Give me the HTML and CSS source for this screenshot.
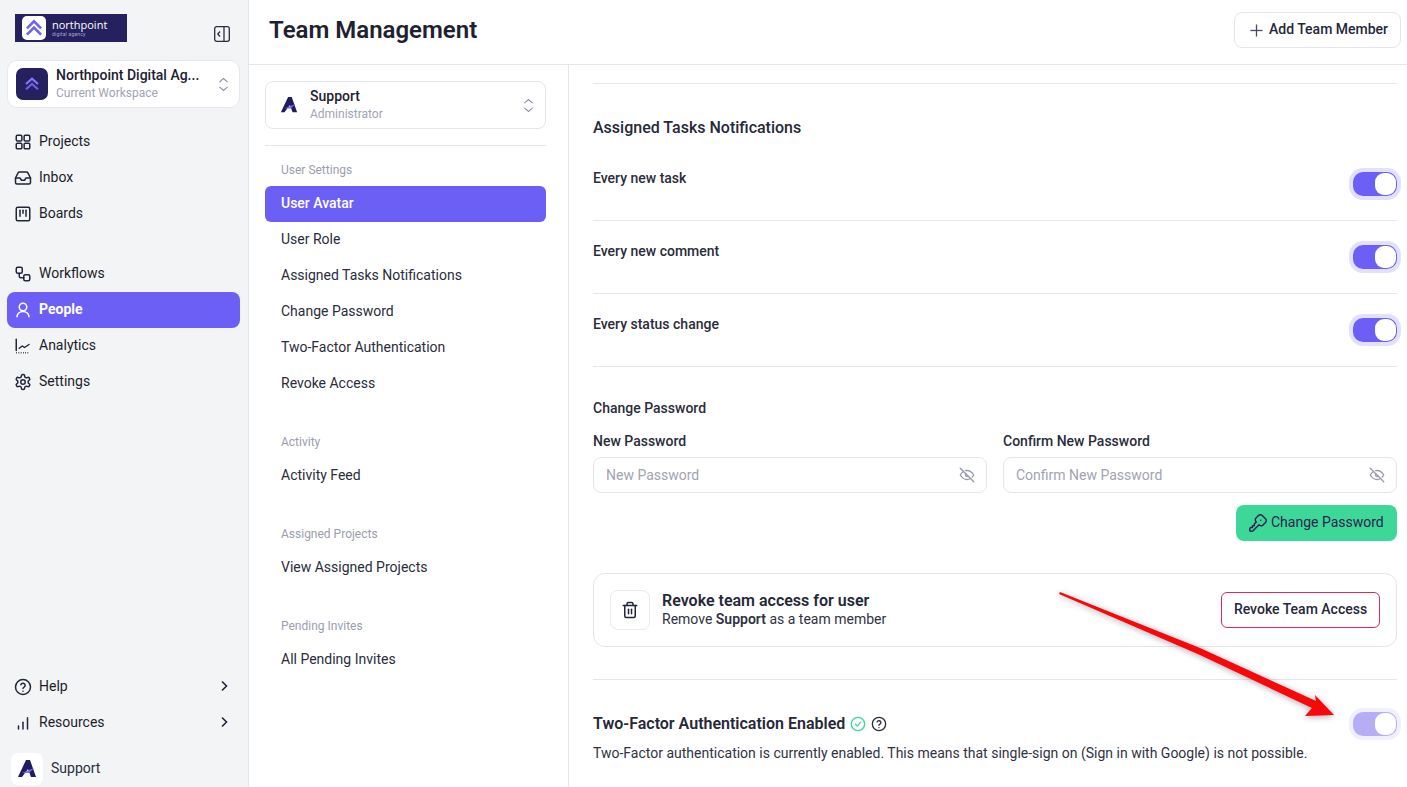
FILE: index.html
```html
<!DOCTYPE html>
<html lang="en">
<head>
<meta charset="utf-8">
<title>Team Management</title>
<link rel="stylesheet" href="styles.css">
</head>
<body>
<div class="app">
  <aside class="sidebar">
    <div class="brand-row">
      <div class="brand">
        <span class="brand-mark"><svg viewBox="0 0 24 24" width="20" height="20" fill="none" stroke="#6f62f3" stroke-width="3.2"><path d="M3.5 12.5L12 4l8.5 8.5"/><path d="M3.5 20L12 11.5l8.5 8.5"/></svg></span>
        <span class="brand-text"><span class="brand-name">northpoint</span><span class="brand-sub">digital agency</span></span>
      </div>
      <svg class="ic16 collapse" viewBox="0 0 16 16" fill="none" stroke="#2a2d3e" stroke-width="1.3" stroke-linejoin="round"><rect x="0.7" y="0.7" width="14.6" height="14.6" rx="2"/><path d="M10 1v14"/><path d="M6 5.5L3.8 8 6 10.5"/></svg>
    </div>
    <div class="workspace">
      <span class="ws-logo"><svg viewBox="0 0 24 24" width="18" height="18" fill="none" stroke="#8577f5" stroke-width="3"><path d="M4 12l8-7 8 7"/><path d="M4 19l8-7 8 7" stroke="#6c5ff0"/></svg></span>
      <span class="ws-text"><span class="ws-name">Northpoint Digital Ag...</span><span class="ws-sub">Current Workspace</span></span>
      <svg class="selector" viewBox="0 0 12 16" fill="none" stroke="#8d8fa3" stroke-width="1.2"><path d="M1.5 5.5L6 1.5l4.5 4"/><path d="M1.5 10.5L6 14.5l4.5-4"/></svg>
    </div>
    <nav class="nav nav-first">
      <a class="nav-item"><svg class="ic" viewBox="0 0 24 24"><rect x="3" y="3" width="7.5" height="7.5" rx="1.5"/><rect x="13.5" y="3" width="7.5" height="7.5" rx="1.5"/><rect x="3" y="13.5" width="7.5" height="7.5" rx="1.5"/><rect x="13.5" y="13.5" width="7.5" height="7.5" rx="1.5"/></svg>Projects</a>
      <a class="nav-item"><svg class="ic" viewBox="0 0 24 24"><polyline points="22 12 16 12 14 15 10 15 8 12 2 12"/><path d="M5.45 5.11 2 12v6a2 2 0 0 0 2 2h16a2 2 0 0 0 2-2v-6l-3.45-6.89A2 2 0 0 0 16.76 4H7.24a2 2 0 0 0-1.79 1.11z"/></svg>Inbox</a>
      <a class="nav-item"><svg class="ic" viewBox="0 0 24 24"><rect x="3" y="3" width="18" height="18" rx="2"/><path d="M8 7v8"/><path d="M12 7v4"/><path d="M16 7v8"/></svg>Boards</a>
    </nav>
    <nav class="nav nav-second">
      <a class="nav-item"><svg class="ic" viewBox="0 0 24 24"><rect x="3" y="3" width="8" height="8" rx="2"/><path d="M7 11v4a2 2 0 0 0 2 2h4"/><rect x="13" y="13" width="8" height="8" rx="2"/></svg>Workflows</a>
      <a class="nav-item active"><svg class="ic" viewBox="0 0 24 24"><circle cx="12" cy="8" r="5"/><path d="M4 21c0-4 3.500-7 8-7s8 3 8 7"/></svg>People</a>
      <a class="nav-item"><svg class="ic" viewBox="0 0 24 24"><path d="M3 3v15"/><path class="dots" d="M3 21h18"/><path d="M7 15l4-3 3 2 6-4"/></svg>Analytics</a>
      <a class="nav-item"><svg class="ic" viewBox="0 0 24 24"><path d="M12.22 2h-.44a2 2 0 0 0-2 2v.18a2 2 0 0 1-1 1.73l-.43.25a2 2 0 0 1-2 0l-.15-.08a2 2 0 0 0-2.73.73l-.22.38a2 2 0 0 0 .73 2.73l.15.1a2 2 0 0 1 1 1.72v.51a2 2 0 0 1-1 1.74l-.15.09a2 2 0 0 0-.73 2.73l.22.38a2 2 0 0 0 2.73.73l.15-.08a2 2 0 0 1 2 0l.43.25a2 2 0 0 1 1 1.73V20a2 2 0 0 0 2 2h.44a2 2 0 0 0 2-2v-.18a2 2 0 0 1 1-1.73l.43-.25a2 2 0 0 1 2 0l.15.08a2 2 0 0 0 2.73-.73l.22-.39a2 2 0 0 0-.73-2.73l-.15-.08a2 2 0 0 1-1-1.74v-.5a2 2 0 0 1 1-1.74l.15-.09a2 2 0 0 0 .73-2.73l-.22-.38a2 2 0 0 0-2.73-.73l-.15.08a2 2 0 0 1-2 0l-.43-.25a2 2 0 0 1-1-1.73V4a2 2 0 0 0-2-2z"/><circle cx="12" cy="12" r="3"/></svg>Settings</a>
    </nav>
    <nav class="nav nav-bottom">
      <a class="nav-item"><svg class="ic" viewBox="0 0 24 24"><circle cx="12" cy="12" r="10"/><path d="M9.100 9a3 3 0 0 1 5.800 1c0 2-3 2.500-3 4"/><path d="M12 17.500h.01"/></svg>Help<svg class="chev" viewBox="0 0 12 12"><path d="M4 1.500L8.500 6 4 10.500"/></svg></a>
      <a class="nav-item"><svg class="ic" viewBox="0 0 24 24"><path d="M6 20v-4"/><path d="M12 20v-9"/><path d="M18 20V5"/></svg>Resources<svg class="chev" viewBox="0 0 12 12"><path d="M4 1.500L8.500 6 4 10.500"/></svg></a>
    </nav>
    <div class="me">
      <span class="me-logo"><svg viewBox="0 0 20 20" width="20" height="20"><polygon points="9,1 13,1 19,18 14,18 11,10 5,18 1,18" fill="#1e1b5e"/><polygon points="5,14 17,9 12,14" fill="#7a6cf2"/></svg></span>
      <span class="me-name">Support</span>
    </div>
  </aside>

  <main class="main">
    <header class="topbar">
      <h1 class="page-title">Team Management</h1>
      <button class="add-btn"><svg class="plus" viewBox="0 0 14 14" fill="none" stroke="#4a4c60" stroke-width="1.4"><path d="M7 .5v13"/><path d="M.5 7h13"/></svg>Add Team Member</button>
    </header>
    <div class="columns">
      <div class="subnav">
        <div class="user-card">
          <svg class="user-logo" viewBox="0 0 20 20" width="18" height="18"><polygon points="9,1 13,1 19,18 14,18 11,10 5,18 1,18" fill="#1e1b5e"/><polygon points="5,14 17,9 12,14" fill="#7a6cf2"/></svg>
          <span class="ws-text"><span class="ws-name">Support</span><span class="ws-sub">Administrator</span></span>
          <svg class="selector" viewBox="0 0 12 16" fill="none" stroke="#8d8fa3" stroke-width="1.2"><path d="M1.500 5.500L6 1.500l4.500 4"/><path d="M1.500 10.500L6 14.500l4.500-4"/></svg>
        </div>
        <hr class="rule subnav-rule">
        <div class="sub-group">
          <div class="sub-label">User Settings</div>
          <a class="sub-item active">User Avatar</a>
          <a class="sub-item">User Role</a>
          <a class="sub-item">Assigned Tasks Notifications</a>
          <a class="sub-item">Change Password</a>
          <a class="sub-item">Two-Factor Authentication</a>
          <a class="sub-item">Revoke Access</a>
        </div>
        <div class="sub-group">
          <div class="sub-label">Activity</div>
          <a class="sub-item">Activity Feed</a>
        </div>
        <div class="sub-group">
          <div class="sub-label">Assigned Projects</div>
          <a class="sub-item">View Assigned Projects</a>
        </div>
        <div class="sub-group">
          <div class="sub-label">Pending Invites</div>
          <a class="sub-item">All Pending Invites</a>
        </div>
      </div>

      <section class="panel">
        <hr class="rule">
        <h2 class="section-title">Assigned Tasks Notifications</h2>
        <div class="setting"><span class="setting-label">Every new task</span><span class="toggle"><span class="knob"></span></span></div>
        <div class="setting"><span class="setting-label">Every new comment</span><span class="toggle"><span class="knob"></span></span></div>
        <div class="setting"><span class="setting-label">Every status change</span><span class="toggle"><span class="knob"></span></span></div>

        <h3 class="pw-title">Change Password</h3>
        <div class="pw-grid">
          <label class="field"><span class="field-label">New Password</span>
            <span class="input"><span>New Password</span><svg class="eye" viewBox="0 0 24 24"><path d="M10.585 10.587a2 2 0 0 0 2.829 2.828"/><path d="M16.681 16.673a8.717 8.717 0 0 1-4.681 1.327c-3.6 0-6.6-2-9-6 1.272-2.12 2.712-3.678 4.32-4.674m2.86-1.146a9.055 9.055 0 0 1 1.82-.18c3.6 0 6.6 2 9 6-.666 1.11-1.379 2.067-2.138 2.87"/><path d="M3 3l18 18"/></svg></span></label>
          <label class="field"><span class="field-label">Confirm New Password</span>
            <span class="input"><span>Confirm New Password</span><svg class="eye" viewBox="0 0 24 24"><path d="M10.585 10.587a2 2 0 0 0 2.829 2.828"/><path d="M16.681 16.673a8.717 8.717 0 0 1-4.681 1.327c-3.6 0-6.6-2-9-6 1.272-2.12 2.712-3.678 4.32-4.674m2.86-1.146a9.055 9.055 0 0 1 1.82-.18c3.6 0 6.6 2 9 6-.666 1.11-1.379 2.067-2.138 2.87"/><path d="M3 3l18 18"/></svg></span></label>
        </div>
        <div class="pw-actions">
          <button class="green-btn"><svg class="key" viewBox="0 0 24 24"><path d="M16.555 3.843l3.602 3.602a2.877 2.877 0 0 1 0 4.069l-2.643 2.643a2.877 2.877 0 0 1-4.069 0l-.301-.301-6.558 6.558a2 2 0 0 1-1.239.578l-.175.008h-1.172a1 1 0 0 1-.993-.883l-.007-.117v-1.172a2 2 0 0 1 .467-1.284l.119-.13.414-.414h2v-2h2v-2l2.144-2.144-.301-.301a2.877 2.877 0 0 1 0-4.069l2.643-2.643a2.877 2.877 0 0 1 4.069 0z"/><path d="M15 9h.01"/></svg>Change Password</button>
        </div>

        <div class="revoke-card">
          <span class="trash-box"><svg class="ic" viewBox="0 0 24 24"><path d="M3 6h18"/><path d="M19 6v14c0 1-1 2-2 2H7c-1 0-2-1-2-2V6"/><path d="M8 6V4c0-1 1-2 2-2h4c1 0 2 1 2 2v2"/><path d="M10 11v6"/><path d="M14 11v6"/></svg></span>
          <span class="revoke-text"><strong class="revoke-title">Revoke team access for user</strong><span class="revoke-sub">Remove <b>Support</b> as a team member</span></span>
          <button class="revoke-btn">Revoke Team Access</button>
        </div>
        <hr class="rule tfa-rule">
        <div class="tfa-head">
          <span class="tfa-title">Two-Factor Authentication Enabled</span>
          <svg class="tfa-ic" viewBox="0 0 24 24" stroke="#3dd598"><circle cx="12" cy="12" r="10"/><path d="M8 12.200l3 3 5-6"/></svg>
          <svg class="tfa-ic" viewBox="0 0 24 24" stroke="#2a2d3e"><circle cx="12" cy="12" r="10"/><path d="M9.100 9a3 3 0 0 1 5.800 1c0 2-3 2.500-3 4"/><path d="M12 17.500h.01"/></svg>
          <span class="toggle faded"><span class="knob"></span></span>
        </div>
        <p class="tfa-desc">Two-Factor authentication is currently enabled. This means that single-sign on (Sign in with Google) is not possible.</p>
      </section>
    </div>
  </main>
</div>
<svg class="arrow" viewBox="0 0 1407 787" width="1407" height="787"><polygon points="1060,592 1200,648 1316,701 1315,695 1334,715 1305,716 1312,708 1200,655 1059,594" fill="#f80808"/></svg>
</body>
</html>
```

FILE: styles.css
```css
* { box-sizing: border-box; }
html, body { margin: 0; height: 100%; overflow: hidden; }
body { font-family: Roboto, "Liberation Sans", sans-serif; font-size: 14px; color: #1f2130; background: #fff; }
.app { display: flex; height: 787px; }

.sidebar { width: 249px; flex: none; background: #f3f4f6; border-right: 1px solid #e6e7ec; display: flex; flex-direction: column; padding: 0 8px 2px 7px; }
.brand-row { display: flex; justify-content: space-between; align-items: flex-start; padding: 14px 10px 0 8px; height: 60px; }
.brand { width: 112px; height: 28px; background: #25215f; display: flex; align-items: center; padding-left: 7px; gap: 6px; }
.brand-mark { width: 24px; height: 24px; border-radius: 5px; background: #fff; display: flex; align-items: center; justify-content: center; }
.brand-text { display: flex; flex-direction: column; color: #fff; line-height: 1; }
.brand-name { font-size: 11px; line-height: 12px; font-family: "Open Sans", sans-serif; }
.brand-sub { font-size: 5px; line-height: 6px; color: #a9a6d8; letter-spacing: .2px; }
.ic16 { width: 16px; height: 16px; }
.collapse { margin-top: 12px; }

.workspace { height: 48px; background: #fff; border: 1px solid #e7e8ed; border-radius: 10px; display: flex; align-items: center; padding: 0 10px 0 8px; }
.ws-logo { width: 32px; height: 32px; border-radius: 7px; background: #25215f; display: flex; align-items: center; justify-content: center; flex: none; }
.ws-text { display: flex; flex-direction: column; flex: 1; margin-left: 8px; min-width: 0; padding-bottom: 1px; }
.ws-name { font-size: 14px; line-height: 16px; font-weight: 500; color: #1d2035; }
.ws-sub { font-size: 12px; line-height: 16px; color: #a1a3b3; margin-top: 2px; }
.selector { width: 11px; height: 15px; flex: none; }

.nav { display: flex; flex-direction: column; }
.nav-first { margin-top: 16px; }
.nav-second { margin-top: 24px; }
.nav-bottom { margin-top: auto; }
.nav-item { height: 36px; display: flex; align-items: center; gap: 7px; padding: 0 10px 2px 7px; border-radius: 8px; color: #1c1c2b; }
.nav-item.active { background: #6c5ff5; color: #fff; font-weight: 700; }
.ic { width: 18px; height: 18px; flex: none; fill: none; stroke: #23253a; stroke-width: 2; stroke-linecap: round; stroke-linejoin: round; }
.active .ic { stroke: #fff; }
.ic .dots { stroke-dasharray: 1 2; stroke-linecap: butt; }
.nav-item .ic { margin-top: 2px; }
.chev { width: 12px; height: 12px; margin-left: auto; fill: none; stroke: #23253a; stroke-width: 1.6; }
.me { display: flex; align-items: center; gap: 8px; margin-top: 12px; padding-left: 4px; color: #2a2d3e; }
.me-name { padding-bottom: 2px; }
.me-logo { width: 32px; height: 32px; background: #fff; border-radius: 7px; display: flex; align-items: center; justify-content: center; }

.main { flex: 1; display: flex; flex-direction: column; min-width: 0; }
.topbar { height: 65px; flex: none; border-bottom: 1px solid #e6e7ec; display: flex; align-items: flex-start; justify-content: space-between; padding: 12px 6px 0 20px; }
.page-title { margin: 2px 0 0; font-size: 24px; line-height: 32px; font-weight: 600; color: #1d2130; }
.add-btn { width: 167px; height: 36px; border: 1px solid #e5e6eb; border-radius: 8px; background: #fff; font: 500 14px Roboto, sans-serif; color: #24273c; display: flex; align-items: center; padding: 0 0 2px 15px; gap: 6px; }
.plus { width: 13px; height: 13px; margin-top: 2px; }

.columns { flex: 1; display: flex; min-height: 0; }
.subnav { width: 320px; flex: none; border-right: 1px solid #e6e7ec; padding: 16px 22px 0 16px; }
.user-card { height: 48px; border: 1px solid #e5e6eb; border-radius: 8px; display: flex; align-items: center; padding: 0 11px 0 14px; }
.user-card .ws-text { margin-left: 12px; }
.user-logo { flex: none; }
.rule { height: 1px; border: 0; margin: 0; background: #e6e7ec; }
.subnav-rule { margin: 16px 0; }
.sub-group { margin-bottom: 32px; }
.sub-label { height: 16px; line-height: 16px; font-size: 12px; color: #9b9dae; padding-left: 16px; margin-bottom: 8px; }
.sub-item { display: block; height: 36px; line-height: 34px; padding-left: 16px; color: #2a2c3c; border-radius: 6px; }
.sub-item.active { background: #6c5ff5; color: #fff; font-weight: 500; }

.panel { flex: 1; min-width: 0; padding: 18px 10px 0 24px; }
.section-title { margin: 32px 0 8px; font-size: 16px; line-height: 24px; font-weight: 500; color: #262838; }
.setting { height: 73px; border-bottom: 1px solid #e6e7ec; display: flex; justify-content: space-between; align-items: flex-start; padding-top: 20px; }
.setting-label { line-height: 20px; font-weight: 500; color: #2a2c3c; }
.setting .toggle { margin-top: 4px; }
.toggle { width: 44px; height: 24px; border-radius: 10px; background: #6c5ff5; box-shadow: 0 0 0 4px #e3e0fd; display: flex; align-items: center; justify-content: flex-end; padding-right: 1px; flex: none; }
.knob { width: 21px; height: 22px; border-radius: 9px; background: #fff; }
.toggle.faded { background: #b5aef5; box-shadow: 0 0 0 4px #f0effd; margin-left: auto; }

.pw-title { margin: 31px 0 0; font-size: 14px; line-height: 20px; font-weight: 500; color: #2a2c3c; }
.pw-grid { display: grid; grid-template-columns: 1fr 1fr; gap: 16px; margin-top: 13px; }
.field { display: flex; flex-direction: column; }
.field-label { line-height: 20px; font-weight: 500; color: #2a2c3c; margin-bottom: 6px; }
.input { height: 36px; border: 1px solid #e5e6eb; border-radius: 8px; display: flex; align-items: center; justify-content: space-between; padding: 0 10px 0 12px; color: #a1a3b3; }
.eye { width: 18px; height: 18px; fill: none; stroke: #9a9cae; stroke-width: 1.8; stroke-linecap: round; stroke-linejoin: round; }
.pw-actions { display: flex; justify-content: flex-end; margin-top: 12px; }
.green-btn { width: 161px; height: 36px; border: 0; border-radius: 8px; background: #3dd798; font: 400 14px Roboto, sans-serif; color: #2c2350; display: flex; align-items: center; gap: 2px; padding: 0 0 2px 11px; }
.key { width: 22px; height: 22px; margin-top: 2px; fill: none; stroke: #2c2350; stroke-width: 1.6; stroke-linejoin: round; stroke-linecap: round; }

.revoke-card { margin-top: 32px; height: 74px; border: 1px solid #e5e6eb; border-radius: 12px; display: flex; align-items: center; padding: 0 16px; }
.trash-box { width: 40px; height: 40px; border: 1px solid #e8e9ee; border-radius: 8px; display: flex; align-items: center; justify-content: center; }
.revoke-text { display: flex; flex-direction: column; margin-left: 12px; flex: 1; padding-bottom: 2px; }
.revoke-title { font-size: 16px; line-height: 20px; font-weight: 600; color: #262838; }
.revoke-sub { line-height: 17px; color: #2f3244; }
.revoke-sub b { font-weight: 600; }
.revoke-btn { width: 159px; height: 36px; border: 1px solid #e0265e; border-radius: 6px; background: #fff; font: 500 14px Roboto, sans-serif; color: #24273c; padding: 0 0 2px; }
.tfa-rule { margin-top: 32px; }
.tfa-head { display: flex; align-items: center; gap: 5px; margin-top: 32px; height: 24px; }
.tfa-title { font-size: 16px; line-height: 24px; font-weight: 600; color: #262838; }
.tfa-ic { width: 16px; height: 16px; fill: none; stroke-width: 2; stroke-linecap: round; stroke-linejoin: round; }
.tfa-desc { margin: 7px 0 0; line-height: 20px; color: #2f3244; }

.arrow { position: absolute; top: 0; left: 0; pointer-events: none; filter: drop-shadow(0 1px 3px rgba(50,50,80,.45)); }
```
